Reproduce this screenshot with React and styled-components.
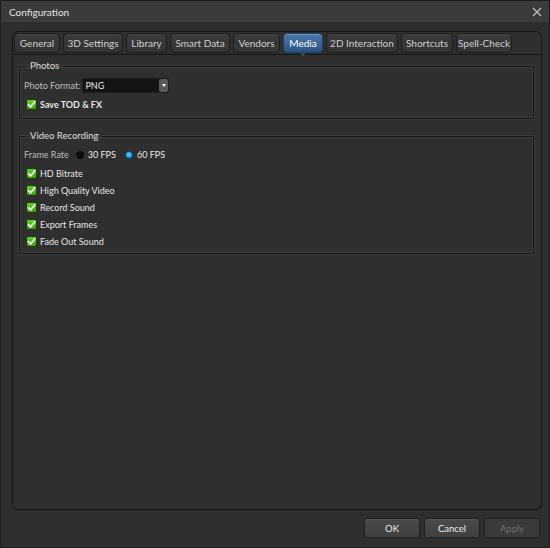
import React from 'react';
import styled, { createGlobalStyle } from 'styled-components';

const GlobalStyle = createGlobalStyle`
    html, body {
        margin:0;
        padding:0;
        background:#2d2d2d;
    }
    body {
        font-family:Lato, "Open Sans", sans-serif;
        color:#d6d6d6;
    }
`;

const Window = styled.div`
    width:550px;
    height:548px;
    box-sizing:border-box;
    display:flex;
    flex-direction:column;
    background:#2e2e2e;
    border:1px solid #1c1c1c;
`;

const TitleBar = styled.div`
    height:21px;
    flex:none;
    display:flex;
    align-items:center;
    justify-content:space-between;
    padding:0 6px 0 8px;
    background:#3b3b3b;
    font-size:10px;
    color:#e4e4e4;
`;

const CloseBtn = styled.div`
    width:12px;
    height:12px;
    display:flex;
    align-items:center;
    justify-content:center;
`;

const Body = styled.div`
    flex:1;
    display:flex;
    flex-direction:column;
    padding:9px 7px 9px 11px;
    gap:8px;
    min-height:0;
`;

const TabFrame = styled.div`
    flex:1;
    display:flex;
    flex-direction:column;
    border:1px solid #151515;
    border-radius:6px;
    background:#2f2f2f;
    padding:1px 1px 0 1px;
    min-height:0;
`;

const TabStrip = styled.div`
    display:flex;
    gap:3px;
    height:20px;
    flex:none;
`;

const Tab = styled.div`
    position:relative;
    flex:none;
    box-sizing:border-box;
    width:${p => p.$w}px;
    white-space:nowrap;
    display:flex;
    align-items:center;
    justify-content:center;
    border-radius:4px;
    font-size:10px;
    color:${p => p.$active ? '#ffffff' : '#cfcfcf'};
    border:1px solid ${p => p.$active ? '#203d5e' : '#1d1d1d'};
    background:${p => p.$active
        ? 'linear-gradient(#4a7aab, #2b5381)'
        : 'linear-gradient(#3a3a3a, #333333)'};
    box-shadow:inset 0 1px 0 ${p => p.$active ? '#6c97c2' : '#454545'};

    &::after {
        content:'';
        display:${p => p.$active ? 'block' : 'none'};
        position:absolute;
        left:50%;
        bottom:-4px;
        margin-left:-3px;
        border-left:3px solid transparent;
        border-right:3px solid transparent;
        border-top:3px solid #2b5381;
    }
`;

const Panel = styled.div`
    flex:1;
    margin-top:1px;
    border-top:1px solid #151515;
    display:flex;
    flex-direction:column;
    gap:11px;
    padding:5px 6px 0 5px;
`;

const Group = styled.fieldset`
    margin:0;
    padding:${p => p.$pt || 6}px 5px ${p => p.$pb || 6}px 4px;
    border:1px solid #161616;
    box-shadow:inset 0 0 0 1px #3c3c3c, 0 0 0 1px #3a3a3a;
    border-radius:1px;
    display:flex;
    flex-direction:column;
    gap:${p => p.$gap || 4}px;
    box-sizing:border-box;
`;

const Legend = styled.legend`
    padding:0 4px;
    margin-left:2px;
    font-size:9.5px;
    line-height:12px;
    color:#dcdcdc;
`;

const Row = styled.div`
    display:flex;
    align-items:center;
    gap:${p => p.$gap || 3}px;
    height:${p => p.$h || 13}px;
    margin-bottom:${p => p.$mb || 0}px;
`;

const Label = styled.span`
    font-size:9px;
    white-space:nowrap;
    font-weight:${p => p.$bold ? 700 : 400};
    color:${p => p.$dim ? '#bdbdbd' : '#e6e6e6'};
    margin-right:${p => p.$mr || 0}px;
`;

const Select = styled.div`
    width:85px;
    height:13px;
    display:flex;
    align-items:stretch;
    background:#141414;
    border:1px solid #1e1e1e;
    border-radius:2px;
    font-size:9px;
    color:#eaeaea;
`;

const SelectText = styled.div`
    flex:1;
    display:flex;
    align-items:center;
    padding-left:2px;
`;

const SelectArrow = styled.div`
    width:9px;
    display:flex;
    align-items:center;
    justify-content:center;
    background:#5a5a5a;
    border-radius:2px;

    &::before {
        content:'';
        border-left:2.5px solid transparent;
        border-right:2.5px solid transparent;
        border-top:3px solid #ffffff;
    }
`;

const Box = styled.div`
    width:11px;
    height:11px;
    flex:none;
    margin-left:2px;
    box-sizing:border-box;
    border-radius:2px;
    border:1px solid #1d3d0a;
    background:linear-gradient(#5fcf2a, #3c9f12);
    display:flex;
    align-items:center;
    justify-content:center;
`;

const Radio = styled.div`
    width:8px;
    height:8px;
    box-sizing:border-box;
    border-radius:50%;
    flex:none;
    background:${p => p.$on ? 'radial-gradient(circle at 50% 40%, #55c8ff, #0a8fe0)' : '#0d0d0d'};
    border:1px solid ${p => p.$on ? '#0a4d80' : '#080808'};
`;

const Footer = styled.div`
    display:flex;
    justify-content:flex-end;
    gap:4px;
    height:20px;
    flex:none;
    padding-right:2px;
`;

const Button = styled.div`
    width:54px;
    display:flex;
    align-items:center;
    justify-content:center;
    border-radius:3px;
    font-size:9.5px;
    border:1px solid #202020;
    color:${p => p.$disabled ? '#6e6e6e' : '#ececec'};
    background:${p => p.$disabled ? '#3a3a3a' : 'linear-gradient(#4a4a4a, #404040)'};
    box-shadow:inset 0 1px 0 ${p => p.$disabled ? '#404040' : '#555'};
`;

const Check = () => (
    <Box>
        <svg width="9" height="9" viewBox="0 0 10 10">
            <path d="M1.6 5.2 L4 7.6 L8.6 2.2" fill="none" stroke="#fff" strokeWidth="1.9" strokeLinecap="round" strokeLinejoin="round" />
        </svg>
    </Box>
);

const CheckRow = ({ label, bold }) => (
    <Row $h={13}>
        <Check />
        <Label $bold={bold}>{label}</Label>
    </Row>
);

const tabs = [
    { name: 'General', w: 46 },
    { name: '3D Settings', w: 60 },
    { name: 'Library', w: 41 },
    { name: 'Smart Data', w: 60 },
    { name: 'Vendors', w: 47 },
    { name: 'Media', w: 40, active: true },
    { name: '2D Interaction', w: 72 },
    { name: 'Shortcuts', w: 52 },
    { name: 'Spell-Check', w: 56 },
];

const videoOpts = ['HD Bitrate', 'High Quality Video', 'Record Sound', 'Export Frames', 'Fade Out Sound'];

const App = () => {
    return <>
        <GlobalStyle />
        <Window>
            <TitleBar>
                <span>Configuration</span>
                <CloseBtn>
                    <svg width="10" height="10" viewBox="0 0 10 10">
                        <path d="M1 1 L9 9 M9 1 L1 9" stroke="#bdbdbd" strokeWidth="1.3" />
                    </svg>
                </CloseBtn>
            </TitleBar>
            <Body>
                <TabFrame>
                    <TabStrip>
                        {tabs.map(t => (
                            <Tab key={t.name} $active={t.active} $w={t.w}>{t.name}</Tab>
                        ))}
                    </TabStrip>
                    <Panel>
                        <Group $gap={5} $pt={6} $pb={7}>
                            <Legend>Photos</Legend>
                            <Row $gap={2} $h={15}>
                                <Label $dim>Photo Format:</Label>
                                <Select>
                                    <SelectText>PNG</SelectText>
                                    <SelectArrow />
                                </Select>
                            </Row>
                            <CheckRow label="Save TOD & FX" bold />
                        </Group>
                        <Group $gap={4} $pt={5} $pb={5}>
                            <Legend>Video Recording</Legend>
                            <Row $gap={4} $h={15} $mb={1}>
                                <Label $dim $mr={3}>Frame Rate</Label>
                                <Radio />
                                <Label $mr={5}>30 FPS</Label>
                                <Radio $on />
                                <Label>60 FPS</Label>
                            </Row>
                            {videoOpts.map(o => <CheckRow key={o} label={o} />)}
                        </Group>
                    </Panel>
                </TabFrame>
                <Footer>
                    <Button>OK</Button>
                    <Button>Cancel</Button>
                    <Button $disabled>Apply</Button>
                </Footer>
            </Body>
        </Window>
    </>
}

export default App;
